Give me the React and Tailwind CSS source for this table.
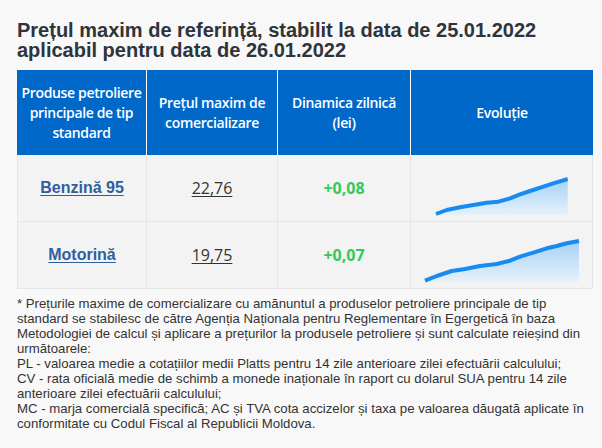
import React from "react";

function Chart({ w, h, pts, id }) {
  const line = pts.map((p, i) => `${i ? "L" : "M"}${p[0]},${p[1]}`).join(" ");
  const last = pts[pts.length - 1];
  const area = `${line} L${last[0]},${h} L${pts[0][0]},${h} Z`;
  return (
    <svg width={w} height={h} viewBox={`0 0 ${w} ${h}`} className="block overflow-visible">
      <defs>
        <linearGradient id={id} x1="0" y1="0" x2="0" y2="1">
          <stop offset="0%" stopColor="#a6d1f7" />
          <stop offset="100%" stopColor="#e6f1fb" />
        </linearGradient>
      </defs>
      <path d={area} fill={`url(#${id})`} />
      <path d={line} fill="none" stroke="#168bf2" strokeWidth="4" strokeLinejoin="round" />
    </svg>
  );
}

const chart1 = [
  [0, 52], [10.7, 48], [24, 45.3], [37.3, 43], [50.7, 40.7], [62.3, 39.7], [74, 36.3],
  [84, 32.3], [94, 29], [107.3, 24.7], [117.3, 21.3], [131.7, 17],
];
const chart2 = [
  [0, 51.7], [11.7, 47], [26.7, 42], [40, 40], [55, 37], [71.7, 35], [85, 31.7], [95, 27.7],
  [108.3, 23.7], [121.7, 19.3], [131.7, 17], [141.7, 14.3], [154, 12],
];

const foot = [
  "* Prețurile maxime de comercializare cu amănuntul a produselor petroliere principale de tip",
  "standard se stabilesc de către Agenția Naționala pentru Reglementare în Egergetică în baza",
  "Metodologiei de calcul și aplicare a prețurilor la produsele petroliere și sunt calculate reieșind din",
  "următoarele:",
  "PL - valoarea medie a cotațiilor medii Platts pentru 14 zile anterioare zilei efectuării calculului;",
  "CV - rata oficială medie de schimb a monede inaționale în raport cu dolarul SUA pentru 14 zile",
  "anterioare zilei efectuării calculului;",
  "MC - marja comercială specifică; AC și TVA cota accizelor și taxa pe valoarea dăugată aplicate în",
  "conformitate cu Codul Fiscal al Republicii Moldova.",
];

export default function App() {
  const head = "flex items-center justify-center text-center text-white text-[14px] leading-[20px] font-semibold tracking-[-0.35px] font-['Open_Sans',sans-serif]";
  return (
    <div className="w-[602px] h-[448px] bg-[#f8f8f8] overflow-hidden font-['Liberation_Sans',Arial,sans-serif]">
      <div className="pl-[17px] pt-[20px] w-[594px]">
        <h1 className="text-[20px] leading-[20px] font-bold text-[#2f343b]">
          Prețul maxim de referință, stabilit la data de 25.01.2022
          <br />
          aplicabil pentru data de 26.01.2022
        </h1>
        <div className="mt-[10px] w-[576px] grid grid-cols-[130px_131px_133px_182px]">
          <div className={`${head} bg-[#0068c9] h-[85px] border-r border-white`}>
            Produse petroliere principale de tip standard
          </div>
          <div className={`${head} bg-[#0068c9] h-[85px] border-r border-white px-2`}>
            Prețul maxim de comercializare
          </div>
          <div className={`${head} bg-[#0068c9] h-[85px] border-r border-white px-3`}>
            Dinamica zilnică (lei)
          </div>
          <div className={`${head} bg-[#0068c9] h-[85px]`}>Evoluție</div>

          {[
            { name: "Benzină 95", price: "22,76", d: "+0,08", c: <Chart w={132} h={53} pts={chart1} id="g1" /> },
            { name: "Motorină", price: "19,75", d: "+0,07", c: <Chart w={154} h={53} pts={chart2} id="g2" /> },
          ].map((r, i) => (
            <React.Fragment key={i}>
              <div className="h-[67px] bg-[#f3f3f3] border-l border-b border-r border-[#e6e6e6] flex items-center justify-center">
                <span className="text-[16px] font-bold text-[#2e5f9e] underline underline-offset-[2px]">{r.name}</span>
              </div>
              <div className="h-[67px] bg-[#f3f3f3] border-b border-r border-[#e6e6e6] flex items-center justify-center">
                <span className="text-[16px] text-[#333] underline underline-offset-[2px] font-['Open_Sans',sans-serif]">{r.price}</span>
              </div>
              <div className="h-[67px] bg-[#f3f3f3] border-b border-r border-[#e6e6e6] flex items-center justify-center">
                <span className="text-[16px] font-bold text-[#35c95a] font-['Open_Sans',sans-serif]">{r.d}</span>
              </div>
              <div className="h-[67px] bg-[#f3f3f3] border-b border-r border-[#e6e6e6] flex items-center justify-center">
                {r.c}
              </div>
            </React.Fragment>
          ))}
        </div>
        <div className="mt-[7px] text-[13.2px] leading-[15px] text-[#333]">
          {foot.map((l, i) => (
            <div key={i} className="whitespace-nowrap">{l}</div>
          ))}
        </div>
      </div>
    </div>
  );
}
